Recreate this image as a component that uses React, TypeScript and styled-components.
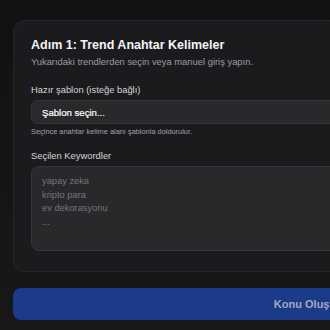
import styled, { createGlobalStyle } from "styled-components";

const GlobalStyle = createGlobalStyle`
  html, body {
    margin: 0;
    padding: 0;
    background: linear-gradient(180deg, #111113 0%, #18181b 100%);
    min-height: 100%;
    font-family: "Liberation Sans", Arial, sans-serif;
    color: #f4f4f5;
  }
`;

const Page = styled.main`
  width: 592px;
  padding: 20px 13px 10px;
  display: flex;
  flex-direction: column;
  gap: 16px;
`;

const Card = styled.section`
  background: #1b1b1e;
  border: 1px solid #26262a;
  border-radius: 12px;
  padding: 16px 17px 20px;
  display: flex;
  flex-direction: column;
`;

const Title = styled.h2`
  margin: 0;
  font-size: 12.5px;
  font-weight: 700;
  color: #f4f4f5;
  line-height: 17px;
`;

const SubTitle = styled.p`
  margin: 1px 0 0;
  font-size: 9.4px;
  color: #9b9ba3;
  line-height: 13px;
`;

const Field = styled.div<{ $top: number }>`
  margin-top: ${p => p.$top}px;
  display: flex;
  flex-direction: column;
`;

const Label = styled.label`
  font-size: 9.4px;
  color: #d4d4d8;
  line-height: 13px;
  margin-bottom: 4.5px;
`;

const Select = styled.div`
  height: 24px;
  box-sizing: border-box;
  background: #29292c;
  border: 1px solid #36363a;
  border-radius: 7px;
  padding: 0 10px;
  display: flex;
  align-items: center;
  font-size: 9.6px;
  font-weight: 400;
  color: #ffffff;
  -webkit-text-stroke: 0.2px #ffffff;
`;

const Hint = styled.p`
  margin: 3px 0 0;
  font-size: 7.4px;
  color: #a1a1aa;
  line-height: 10px;
`;

const TextArea = styled.textarea`
  height: 85px;
  box-sizing: border-box;
  background: #29292c;
  border: 1px solid #36363a;
  border-radius: 8px;
  padding: 8px 10px;
  font-family: "Liberation Sans", Arial, sans-serif;
  font-size: 9.3px;
  line-height: 13.5px;
  color: #e4e4e7;
  resize: none;
  outline: none;

  &::placeholder {
    color: #74747b;
  }
`;

const Button = styled.button`
  height: 32px;
  border: none;
  border-radius: 8px;
  background: #1b3a8a;
  color: #a3aabb;
  font-family: "Liberation Sans", Arial, sans-serif;
  font-size: 11px;
  font-weight: 700;
`;

export default function App() {
  return (
    <>
      <GlobalStyle />
      <Page>
        <Card>
          <Title>Adım 1: Trend Anahtar Kelimeler</Title>
          <SubTitle>Yukarıdaki trendlerden seçin veya manuel giriş yapın.</SubTitle>
          <Field $top={14.5}>
            <Label>Hazır şablon (isteğe bağlı)</Label>
            <Select>Şablon seçin...</Select>
            <Hint>Seçince anahtar kelime alanı şablonla doldurulur.</Hint>
          </Field>
          <Field $top={11.5}>
            <Label>Seçilen Keywordler</Label>
            <TextArea placeholder={"yapay zeka\nkripto para\nev dekorasyonu\n..."} />
          </Field>
        </Card>
        <Button disabled>Konu Oluştur</Button>
      </Page>
    </>
  );
}
